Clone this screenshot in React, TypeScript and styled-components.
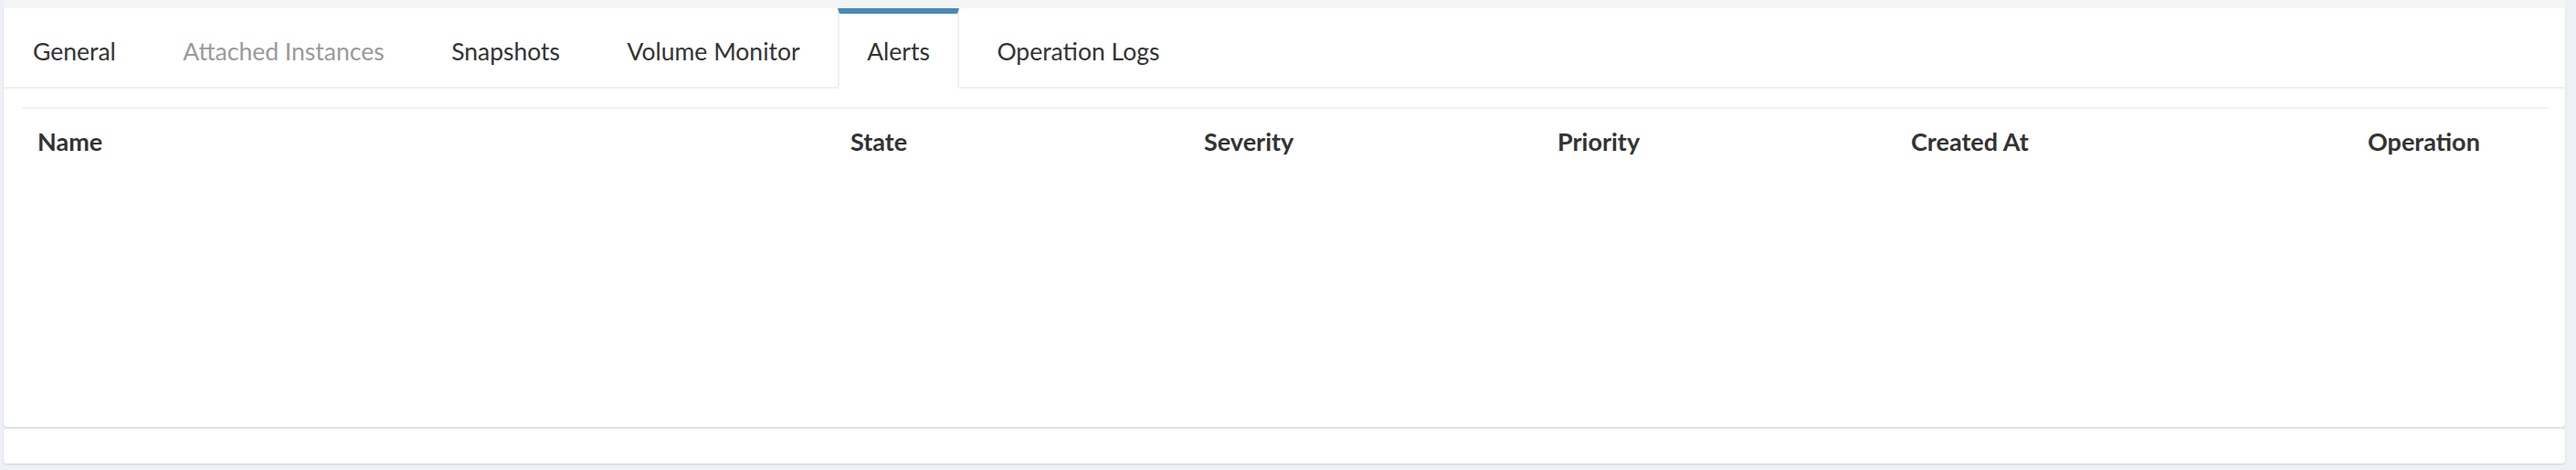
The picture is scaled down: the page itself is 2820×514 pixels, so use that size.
import styled, { createGlobalStyle } from 'styled-components';

const GlobalStyle = createGlobalStyle`
  html, body {
    margin: 0;
    padding: 0;
    background: #edf1f6;
  }
  body {
    font-family: 'Lato', 'Open Sans', sans-serif;
  }
`;

const Page = styled.div`
  width: 2820px;
  height: 514px;
  box-sizing: border-box;
  padding: 0 12px 0 4px;
  display: flex;
  flex-direction: column;
`;

const TopStrip = styled.div`
  height: 9px;
  background: #f4f5f7;
`;

const Card = styled.div`
  height: 458px;
  background: #fff;
  border-radius: 0 0 4px 4px;
  box-shadow: 0 1px 2px rgba(40, 50, 70, 0.16);
  display: flex;
  flex-direction: column;
`;

const TabBar = styled.div`
  display: flex;
  align-items: flex-start;
  height: 88px;
  box-sizing: border-box;
  border-bottom: 2px solid #eff0f2;
`;

const Tab = styled.div<{ $active?: boolean; $disabled?: boolean }>`
  display: flex;
  align-items: center;
  box-sizing: border-box;
  height: ${(p) => (p.$active ? '88px' : '86px')};
  margin-right: 9.5px;
  padding: 2px 30px 0;
  border-top: 6px solid ${(p) => (p.$active ? '#4b89b6' : 'transparent')};
  border-left: 2px solid ${(p) => (p.$active ? '#eff0f2' : 'transparent')};
  border-right: 2px solid ${(p) => (p.$active ? '#eff0f2' : 'transparent')};
  border-bottom: ${(p) => (p.$active ? '2px solid #fff' : '0')};
  background: ${(p) => (p.$active ? '#fff' : 'transparent')};
  font-size: 26.5px;
  color: ${(p) => (p.$disabled ? '#9a9a9a' : '#333')};
  white-space: nowrap;
`;

const Body = styled.div`
  padding: 20px 18px 0 20px;
`;

const Table = styled.div`
  border-top: 2px solid #f0f1f3;
`;

const HeaderRow = styled.div`
  display: grid;
  grid-template-columns: 890px 387px 387px 387px 500px 1fr;
  height: 71px;
  align-items: center;
`;

const HeadCell = styled.div`
  padding-left: 17px;
  font-size: 27px;
  font-weight: 700;
  color: #333;
  white-space: nowrap;
`;

const Footer = styled.div`
  margin-top: 2px;
  height: 38px;
  background: #fff;
  border-radius: 4px;
  box-shadow: 0 1px 2px rgba(40, 50, 70, 0.16);
`;

const tabs = [
  { label: 'General' },
  { label: 'Attached Instances', disabled: true },
  { label: 'Snapshots' },
  { label: 'Volume Monitor' },
  { label: 'Alerts', active: true },
  { label: 'Operation Logs' },
];

const columns = ['Name', 'State', 'Severity', 'Priority', 'Created At', 'Operation'];

function App() {
  return (
    <>
      <GlobalStyle />
      <Page>
        <TopStrip />
        <Card>
          <TabBar>
            {tabs.map((t) => (
              <Tab key={t.label} $active={t.active} $disabled={t.disabled}>
                {t.label}
              </Tab>
            ))}
          </TabBar>
          <Body>
            <Table>
              <HeaderRow>
                {columns.map((c) => (
                  <HeadCell key={c}>{c}</HeadCell>
                ))}
              </HeaderRow>
            </Table>
          </Body>
        </Card>
        <Footer />
      </Page>
    </>
  );
}

export default App;
